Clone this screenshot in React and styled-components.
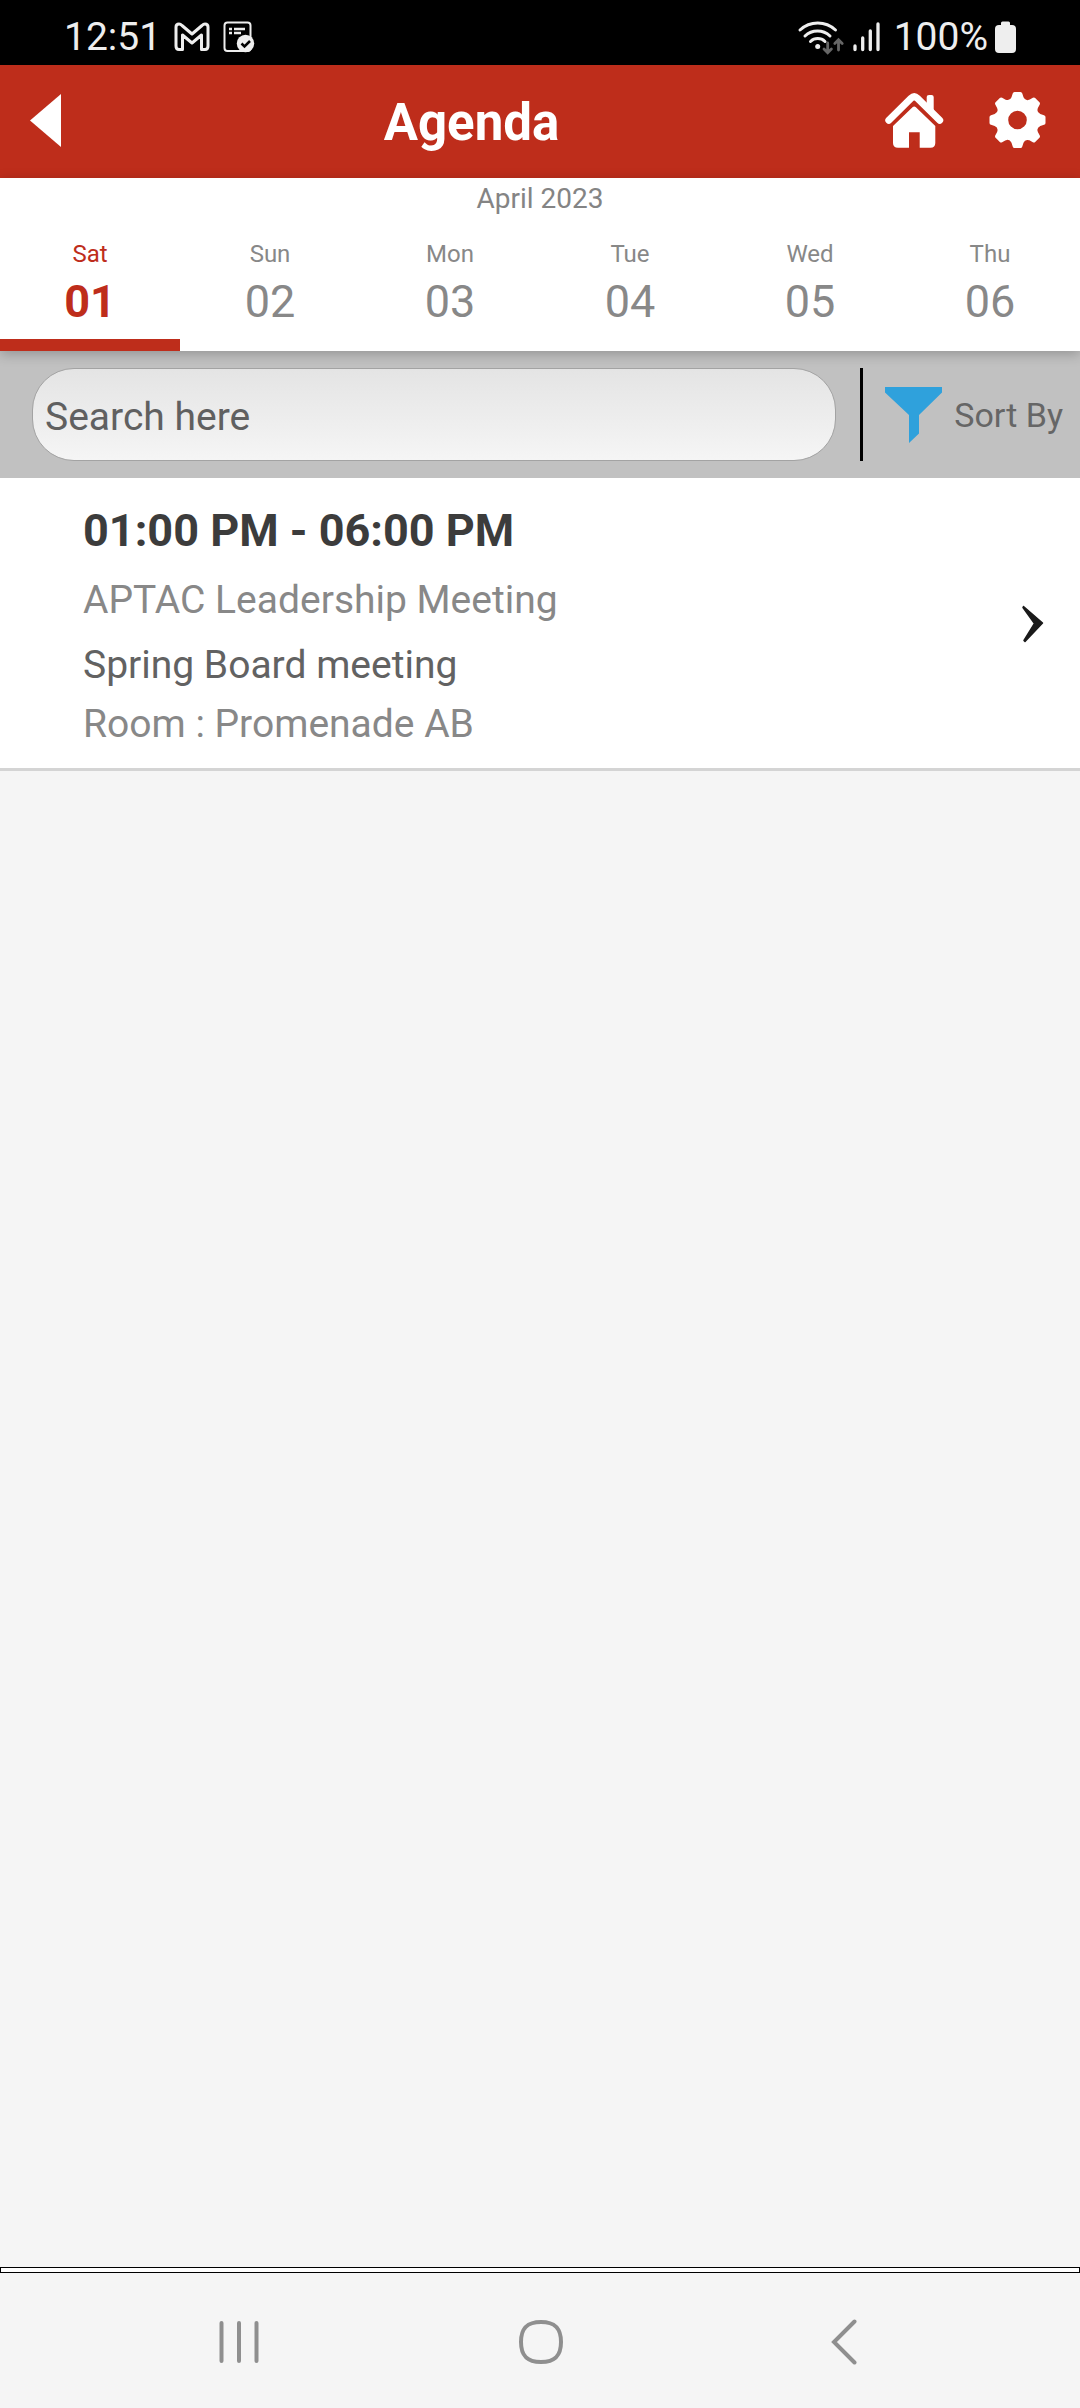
import React, { useState } from 'react';
import styled, { createGlobalStyle } from 'styled-components';

const RED = '#be2d1b';

const GlobalStyle = createGlobalStyle`
  * {
    box-sizing: border-box;
  }
  body {
    margin: 0;
    background-color: #f5f5f5;
    font-family: Roboto, "Liberation Sans", sans-serif;
  }
  h1, h2, p {
    margin: 0;
    font-weight: normal;
  }
  button {
    padding: 0;
    border: 0;
    background: none;
    font-family: inherit;
    cursor: pointer;
  }
  svg {
    display: block;
    flex: none;
  }
`

const Screen = styled.div`
  display: flex;
  flex-direction: column;
  min-height: 100vh;
`

const StatusBar = styled.div`
  display: flex;
  align-items: center;
  justify-content: space-between;
  height: 65px;
  padding: 8px 64px 0;
  background-color: #000;
  color: #eee;
  font-size: 39px;
  line-height: 48px;
`

const StatusGroup = styled.div`
  display: flex;
  align-items: center;
  gap: ${props => props.$gap}px;
`

const Header = styled.header`
  display: flex;
  align-items: center;
  height: 113px;
  padding: 0 34px 3px 30px;
  background-color: ${RED};
  color: #fff;
`

const BackButton = styled.button`
  width: 48px;
  color: inherit;
`

const Title = styled.h1`
  flex: 1;
  padding-top: 6px;
  font-size: 51px;
  font-weight: bold;
  line-height: 60px;
  text-align: center;
`

const Actions = styled.div`
  display: flex;
  gap: 44px;
  padding-left: 20px;
  button {
    color: inherit;
  }
`

const Calendar = styled.section`
  position: relative;
  z-index: 1;
  background-color: #fff;
  box-shadow: 0 3px 12px rgba(0, 0, 0, 0.24);
`

const Month = styled.h2`
  color: #848484;
  font-size: 28px;
  line-height: 42px;
  text-align: center;
`

const Days = styled.div`
  display: grid;
  grid-template-columns: repeat(6, 1fr);
`

const Day = styled.button`
  display: flex;
  flex-direction: column;
  align-items: center;
  gap: 9px;
  padding: 20px 0 12px;
  border-bottom: 12px solid ${props => props.$active ? RED : 'transparent'};
  color: ${props => props.$active ? RED : '#888'};
  font-size: 24px;
  line-height: 28px;
  strong {
    font-size: 45px;
    font-weight: ${props => props.$active ? 'bold' : 'normal'};
    line-height: 50px;
  }
`

const Toolbar = styled.div`
  display: flex;
  align-items: center;
  padding: 17px 17px 17px 32px;
  background-color: #c1c1c1;
`

const SearchInput = styled.input`
  flex: 1;
  min-width: 0;
  height: 93px;
  padding: 4px 12px 0;
  border: 1px solid #a3a3a3;
  border-radius: 42px;
  background: linear-gradient(#e4e4e4, #f5f5f5);
  color: #606060;
  font-family: inherit;
  font-size: 39px;
  outline: none;
  &::placeholder {
    color: #606060;
    opacity: 1;
  }
`

const Divider = styled.div`
  align-self: stretch;
  width: 3px;
  margin: 0 22px 0 24px;
  background-color: #000;
`

const SortButton = styled.button`
  display: flex;
  align-items: center;
  gap: 12px;
  color: #666;
  font-size: 34px;
  line-height: 48px;
`

const List = styled.main`
  flex: 1;
`

const Session = styled.a`
  display: flex;
  align-items: center;
  justify-content: space-between;
  padding: 17px 36px 16px 83px;
  border-bottom: 3px solid #d4d4d4;
  background-color: #fff;
  color: #888;
  font-size: 39px;
  line-height: 56px;
  text-decoration: none;
`

const Time = styled.h2`
  margin-bottom: 5px;
  color: #3c3c3c;
  font-size: 45px;
  font-weight: bold;
  line-height: 72px;
`

const Track = styled.p`
  margin-bottom: 9px;
`

const Name = styled.p`
  margin-bottom: 3px;
  color: #626262;
`

const BannerSlot = styled.div`
  height: 6px;
  border: 1px solid #000;
  background-color: #fff;
`

const SystemNav = styled.nav`
  display: grid;
  grid-template-columns: repeat(3, 1fr);
  height: 135px;
  padding: 2px 85px 0 88px;
  button {
    display: flex;
    align-items: center;
    justify-content: center;
  }
`

const MailIcon = () => (
  <svg width="36" height="30" viewBox="0 0 36 30" fill="none" stroke="#eee" strokeWidth="3" strokeLinejoin="round">
    <path d="M2 24V5Q2 2 5 2Q6.500 2 8 3.500L18 12L28 3.500Q29.500 2 31 2Q34 2 34 5V24Q34 27.500 31 27.500H27.500V13L18 21L8.500 13V27.500H5Q2 27.500 2 24Z" />
  </svg>
)

const TaskIcon = () => (
  <svg width="32" height="32" viewBox="0 0 32 32" fill="none" stroke="#eee">
    <rect x="1.500" y="1.500" width="26" height="28.500" rx="3" strokeWidth="2" />
    <path d="M6 8h3M11 8h11M6 12h3M11 12h7" strokeWidth="2.500" />
    <circle cx="22.500" cy="22.500" r="8.700" fill="#eee" stroke="none" />
    <path d="M18.500 22.500l3 3 5.500-5.500" stroke="#000" strokeWidth="2.500" />
  </svg>
)

const WifiIcon = () => (
  <svg width="48" height="36" viewBox="0 0 48 36" fill="none" strokeLinecap="round">
    <g stroke="#eee" strokeWidth="3">
      <path d="M3 11A26 26 0 0 1 38.500 11" />
      <path d="M8 17A18 18 0 0 1 33 17" />
      <path d="M13.500 22.500A10.500 10.500 0 0 1 28 22.500" />
    </g>
    <circle cx="20.700" cy="27.500" r="2.500" fill="#eee" />
    <g stroke="#666" strokeWidth="2.800">
      <path d="M30.700 24v9M27 30l3.700 3.700L34.400 30" />
      <path d="M41.500 31v-9M37.800 24.500l3.700-3.700 3.700 3.700" />
    </g>
  </svg>
)

const SignalIcon = () => (
  <svg width="28" height="30" viewBox="0 0 28 30" stroke="#eee" strokeWidth="3.300" strokeLinecap="round">
    <path d="M2 24v3.500M9.700 16v11.500M17.300 9v18.500M25 2v25.500" />
  </svg>
)

const BatteryIcon = () => (
  <svg width="21" height="32" viewBox="0 0 21 32" fill="#eee">
    <rect y="4" width="21" height="28" rx="4" />
    <rect x="6" y="0.500" width="9" height="8" rx="1.500" />
  </svg>
)

const HomeIcon = () => (
  <svg width="60" height="56" viewBox="0 0 60 56" fill="currentColor">
    <path d="M41.700 16V5Q41.700 3 44 3H46.500Q48.700 3 48.700 5V20Z" />
    <path d="M3.800 28.200L26 6.200Q29.200 3.200 32.400 6.200L54.700 28.200" fill="none" stroke="currentColor" strokeWidth="7" strokeLinecap="round" />
    <path d="M27.500 15.300Q29.200 13.700 30.900 15.300L50.300 34V51Q50.300 55.700 45.500 55.700H34.700V40.300H24V55.700H13Q8 55.700 8 51V34Z" />
  </svg>
)

// Outline of an eight-tooth cog centred on 0,0
const cogPath = () => {
  const points = [];
  for (let i = 0; i < 8; i += 1) {
    const turn = i * Math.PI / 4;
    const at = (x, y) => {
      const px = x * Math.cos(turn) - y * Math.sin(turn);
      const py = x * Math.sin(turn) + y * Math.cos(turn);
      return `${px.toFixed(2)} ${py.toFixed(2)}`;
    };
    points.push(
      `${i === 0 ? 'M' : 'L'}${at(-6, -22.8)}`,
      `L${at(-4.8, -26.5)}`,
      `Q${at(-4.4, -28)} ${at(-3, -28)}`,
      `L${at(3, -28)}`,
      `Q${at(4.4, -28)} ${at(4.8, -26.5)}`,
      `L${at(6, -22.8)}`,
      `Q${at(8, -18.6)} ${at(11.9, -20.4)}`
    );
  }
  return `${points.join('')}Z`;
}

const GearIcon = () => (
  <svg width="57" height="56" viewBox="-28.5 -28 57 56" fill="currentColor" fillRule="evenodd">
    <path d={`${cogPath()}M9.300 0A9.300 9.300 0 1 0 -9.300 0A9.300 9.300 0 1 0 9.300 0Z`} />
  </svg>
)

const FunnelIcon = () => (
  <svg width="57" height="56" viewBox="0 0 57 56" fill="#2fa1dc">
    <path d="M0 0H57V5.500L34 28V46.500L24 56V28L0 5.500Z" />
  </svg>
)

const days = [
  { name: 'Sat', date: '01' },
  { name: 'Sun', date: '02' },
  { name: 'Mon', date: '03' },
  { name: 'Tue', date: '04' },
  { name: 'Wed', date: '05' },
  { name: 'Thu', date: '06' },
];

const sessions = [
  {
    time: '01:00 PM - 06:00 PM',
    track: 'APTAC Leadership Meeting',
    name: 'Spring Board meeting',
    room: 'Promenade AB',
  },
];

const App = () => {
  const [selected, setSelected] = useState('01');

  return (
    <Screen>
      <GlobalStyle />
      <StatusBar>
        <StatusGroup $gap={13}>
          <span>12:51</span>
          <MailIcon />
          <TaskIcon />
        </StatusGroup>
        <StatusGroup $gap={13}>
          <StatusGroup $gap={8}>
            <WifiIcon />
            <SignalIcon />
          </StatusGroup>
          <StatusGroup $gap={7}>
            <span>100%</span>
            <BatteryIcon />
          </StatusGroup>
        </StatusGroup>
      </StatusBar>

      <Header>
        <BackButton aria-label="Back">
          <svg width="31" height="53" viewBox="0 0 31 53" fill="currentColor">
            <path d="M31 0V53L0 26.500Z" />
          </svg>
        </BackButton>
        <Title>Agenda</Title>
        <Actions>
          <button aria-label="Home"><HomeIcon /></button>
          <button aria-label="Settings"><GearIcon /></button>
        </Actions>
      </Header>

      <Calendar>
        <Month>April 2023</Month>
        <Days>
          {days.map(day => (
            <Day
              key={day.date}
              $active={day.date === selected}
              aria-pressed={day.date === selected}
              onClick={() => setSelected(day.date)}
            >
              <span>{day.name}</span>
              <strong>{day.date}</strong>
            </Day>
          ))}
        </Days>
      </Calendar>

      <Toolbar>
        <SearchInput type="text" placeholder="Search here" aria-label="Search here" />
        <Divider />
        <SortButton>
          <FunnelIcon />
          <span>Sort By</span>
        </SortButton>
      </Toolbar>

      <List>
        {sessions.map(session => (
          <Session key={session.name} href="#session">
            <div>
              <Time>{session.time}</Time>
              <Track>{session.track}</Track>
              <Name>{session.name}</Name>
              <p>Room : {session.room}</p>
            </div>
            <svg width="22" height="38" viewBox="0 0 22 38" fill="#1a1a1a" stroke="#1a1a1a" strokeWidth="1.500" strokeLinejoin="round">
              <path d="M1.500 1.500L20.500 18L3 36.500L2 35.500L12.500 18.500L1 2.500Z" />
            </svg>
          </Session>
        ))}
      </List>

      <BannerSlot />
      <SystemNav>
        <button aria-label="Recent apps">
          <svg width="42" height="44" viewBox="0 0 42 44" stroke="#8f8f8f" strokeWidth="4" strokeLinecap="round">
            <path d="M3.500 3v38M21 3v38M38.500 3v38" />
          </svg>
        </button>
        <button aria-label="Home screen">
          <svg width="44" height="44" viewBox="0 0 44 44" fill="none" stroke="#8f8f8f" strokeWidth="4">
            <path d="M22 2C36 2 42 8 42 22S36 42 22 42 2 36 2 22 8 2 22 2Z" />
          </svg>
        </button>
        <button aria-label="Go back">
          <svg width="26" height="46" viewBox="0 0 26 46" fill="none" stroke="#8f8f8f" strokeWidth="4" strokeLinecap="round">
            <path d="M23.500 2.500L3 23L23.500 43.500" />
          </svg>
        </button>
      </SystemNav>
    </Screen>
  )
}

export default App;
